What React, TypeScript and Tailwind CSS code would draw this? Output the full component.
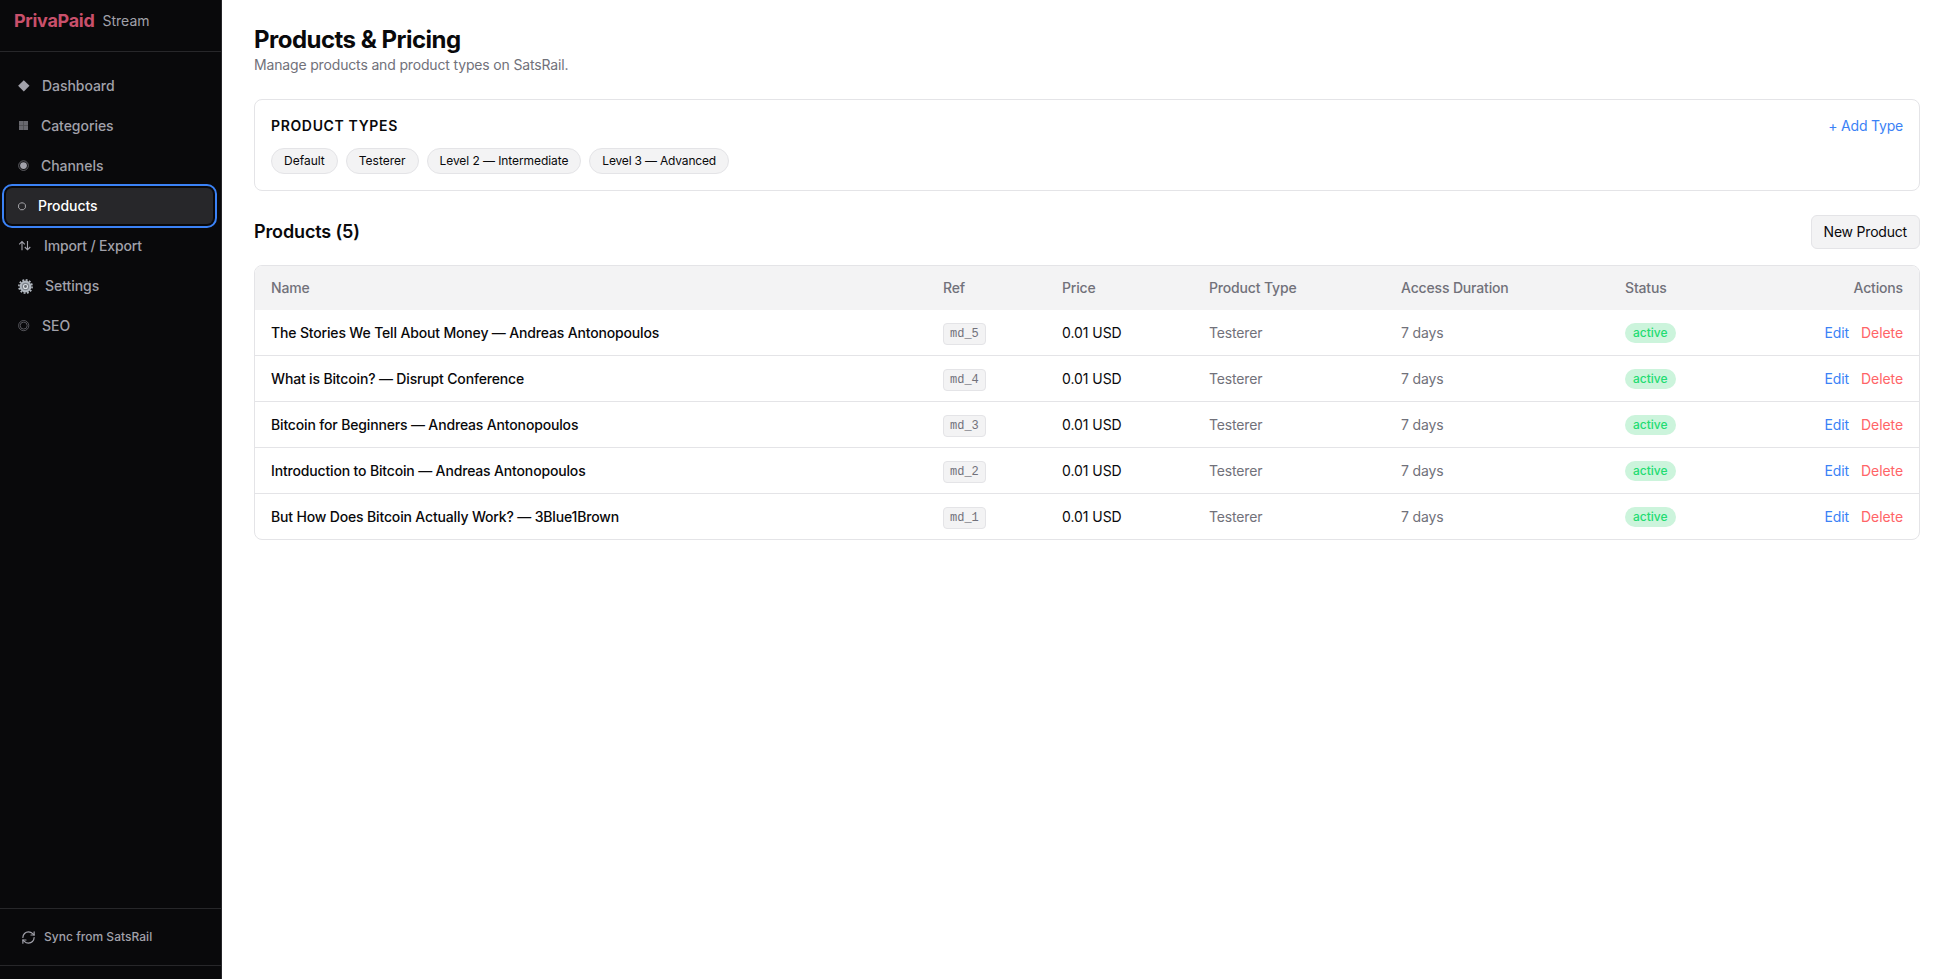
import { useState } from 'react';
import type { ReactNode } from 'react';
import { RefreshCw } from 'lucide-react';

interface NavItem {
  label: string;
  icon: ReactNode;
  iconClass: string;
  textClass?: string;
}

const GearIcon = () => (
  <svg width="15" height="15" viewBox="0 0 15 15" fill="none">
    <circle cx="7.5" cy="7.5" r="6.6" stroke="#b4bac2" strokeWidth="1.6" strokeDasharray="1.9 1.56" />
    <circle cx="7.5" cy="7.5" r="4.8" fill="#7d838b" stroke="#b0b7bf" strokeWidth="2.2" />
    <circle cx="7.5" cy="7.5" r="2" fill="#62676e" stroke="#dde2e7" strokeWidth="1.1" />
  </svg>
);

const navItems: NavItem[] = [
  {
    label: 'Dashboard',
    iconClass: 'w-[12px]',
    icon: (
      <svg width="12" height="12" viewBox="0 0 12 12">
        <path d="M5.8 0.2 11.5 5.8 5.8 11.4 0.1 5.8Z" fill="#a1a1aa" />
      </svg>
    ),
  },
  {
    label: 'Categories',
    iconClass: 'w-[11px]',
    icon: (
      <svg width="11" height="10" viewBox="0 0 11 10">
        <path d="M1 0h9v9H1z" fill="#68686e" />
        <path d="M5.5 0v9M1 4.5h9" stroke="#4c4c51" strokeWidth="0.8" />
      </svg>
    ),
  },
  {
    label: 'Channels',
    iconClass: 'w-[11px]',
    icon: (
      <svg width="11" height="12" viewBox="0 0 11 12">
        <circle cx="5.5" cy="5.6" r="4.8" fill="none" stroke="#77777e" strokeWidth="0.8" />
        <circle cx="5.5" cy="5.6" r="3.4" fill="#a1a1aa" />
      </svg>
    ),
  },
  {
    label: 'Products',
    iconClass: 'w-[8px]',
    icon: (
      <svg width="8" height="10" viewBox="0 0 8 10" fill="none">
        <path d="M2.5 1.9h3L7.4 3.8v3L5.5 8.7h-3L0.6 6.8v-3Z" stroke="#b4b4b8" strokeWidth="0.9" />
      </svg>
    ),
  },
  {
    label: 'Import / Export',
    iconClass: 'w-[14px]',
    textClass: 'tracking-[-0.15px]',
    icon: (
      <svg width="14" height="12" viewBox="0 0 14 12" fill="none" stroke="#a1a1aa" strokeWidth="1.1">
        <path d="M4 10.3V1.5M1.2 4.3 4 1.5 6.8 4.3M9.5 1v8.8M6.8 7 9.5 9.8 12.3 7" />
      </svg>
    ),
  },
  { label: 'Settings', iconClass: 'w-[15px]', icon: <GearIcon /> },
  {
    label: 'SEO',
    iconClass: 'w-[12px]',
    icon: (
      <svg width="12" height="12" viewBox="0 0 12 12" fill="none" stroke="#74747b" strokeWidth="0.7">
        <circle cx="5.7" cy="5.6" r="5.1" />
        <circle cx="5.7" cy="5.6" r="3.5" />
      </svg>
    ),
  },
];

const productTypes = [
  { name: 'Default', className: '' },
  { name: 'Testerer', className: '' },
  { name: 'Level 2 — Intermediate', className: 'tracking-[-0.08px]' },
  { name: 'Level 3 — Advanced', className: 'tracking-[-0.18px]' },
];

const products = [
  { name: 'The Stories We Tell About Money — Andreas Antonopoulos', ref: 'md_5' },
  { name: 'What is Bitcoin? — Disrupt Conference', ref: 'md_4' },
  { name: 'Bitcoin for Beginners — Andreas Antonopoulos', ref: 'md_3' },
  { name: 'Introduction to Bitcoin — Andreas Antonopoulos', ref: 'md_2' },
  { name: 'But How Does Bitcoin Actually Work? — 3Blue1Brown', ref: 'md_1' },
];

const Sidebar = () => {
  const [active, setActive] = useState('Products');

  return (
    <aside className="flex w-[222px] shrink-0 flex-col border-r border-[#27272a] bg-[#09090b] text-[#a1a1aa]">
      <div className="flex h-[52px] items-start gap-2 border-b border-[#27272a] pl-[14px] pt-[7px]">
        <span className="text-lg font-bold leading-7 tracking-[-0.3px] text-[#c9506b]">PrivaPaid</span>
        <span className="text-sm leading-7">Stream</span>
      </div>

      <nav className="flex flex-1 flex-col gap-1 pl-1.5 pr-2 pt-4">
        {navItems.map((item) => (
          <button
            key={item.label}
            onClick={() => setActive(item.label)}
            className={`flex h-9 items-center gap-3 rounded-md px-3 text-sm font-medium ${
              active === item.label
                ? 'bg-[#27272a] text-white outline-2 outline-offset-2 outline-[#3b82f6]'
                : 'text-[#a1a1aa]'
            }`}
          >
            <span className={`shrink-0 ${item.iconClass}`}>{item.icon}</span>
            <span className={item.textClass ?? 'tracking-[-0.05px]'}>{item.label}</span>
          </button>
        ))}
      </nav>

      <div className="flex h-[57px] items-center gap-2 border-t border-[#27272a] pl-[21px] text-xs font-medium tracking-[0.03px]">
        <RefreshCw size={15} strokeWidth={1.9} />
        Sync from SatsRail
      </div>
      <div className="h-[14px] border-t border-[#27272a]" />
    </aside>
  );
};

const ProductTable = () => (
  <div className="overflow-hidden rounded-lg border border-[#e4e4e7]">
    <table className="w-full table-fixed border-separate border-spacing-0 text-left text-sm tracking-[-0.16px]">
      <colgroup>
        <col className="w-[672px]" />
        <col className="w-[119px]" />
        <col className="w-[147px]" />
        <col className="w-[192px]" />
        <col className="w-[224px]" />
        <col className="w-[155px]" />
        <col />
      </colgroup>
      <thead className="bg-[#f3f3f4] text-[#71717a]">
        <tr className="h-11">
          <th className="px-4 font-medium">Name</th>
          <th className="px-4 font-medium">Ref</th>
          <th className="px-4 font-medium">Price</th>
          <th className="px-4 font-medium">Product Type</th>
          <th className="px-4 font-medium">Access Duration</th>
          <th className="px-4 font-medium">Status</th>
          <th className="px-4 text-right font-medium">Actions</th>
        </tr>
      </thead>
      <tbody className="[&>tr:not(:last-child)>td]:border-b [&>tr:not(:last-child)>td]:border-[#e4e4e7]">
        {products.map((product) => (
          <tr key={product.ref} className="h-[46px] last:h-[45px]">
            <td className="px-4 font-medium">{product.name}</td>
            <td className="px-4">
              <code className="mt-0.5 inline-block rounded border border-[#e4e4e7] bg-[#f3f3f4] px-1.5 py-0.5 align-middle font-['Liberation_Mono',monospace] text-xs tracking-normal text-[#71717a]">
                {product.ref}
              </code>
            </td>
            <td className="px-4 tracking-[-0.06px]">0.01 USD</td>
            <td className="px-4 text-[#71717a]">Testerer</td>
            <td className="px-4 text-[#71717a]">7 days</td>
            <td className="px-4">
              <span className="block w-fit rounded-full bg-[#ccf4dc] px-2 py-0.5 text-xs font-medium tracking-normal text-[#22dc72]">
                active
              </span>
            </td>
            <td className="px-4">
              <div className="flex justify-end gap-3 tracking-[-0.08px]">
                <button className="text-[#3b82f6]">Edit</button>
                <button className="text-[#ff6467]">Delete</button>
              </div>
            </td>
          </tr>
        ))}
      </tbody>
    </table>
  </div>
);

const App = () => {
  return (
    <div className="flex h-screen overflow-hidden bg-white font-['Inter',sans-serif] text-[#09090b]">
      <Sidebar />
      <main className="min-w-0 flex-1 pl-8 pr-6 pt-6">
        <h1 className="text-2xl font-bold leading-8 tracking-[-0.52px]">Products &amp; Pricing</h1>
        <p className="mb-[25px] text-sm leading-[18px] tracking-[-0.16px] text-[#71717a]">
          Manage products and product types on SatsRail.
        </p>

        {/* Product types */}
        <section className="rounded-lg border border-[#e4e4e7] p-4">
          <div className="mb-3 flex items-center justify-between">
            <h2 className="text-sm font-semibold uppercase tracking-[0.65px]">Product Types</h2>
            <button className="text-sm tracking-[-0.2px] text-[#3b82f6]">+ Add Type</button>
          </div>
          <div className="flex gap-2">
            {productTypes.map((type) => (
              <span
                key={type.name}
                className={`rounded-full border border-[#e4e4e7] bg-[#f3f3f4] px-3 py-1 text-xs ${type.className}`}
              >
                {type.name}
              </span>
            ))}
          </div>
        </section>

        {/* Products */}
        <div className="mb-4 mt-6 flex items-center justify-between">
          <h2 className="text-lg font-semibold tracking-[-0.13px]">Products ({products.length})</h2>
          <button className="rounded-md border border-[#e4e4e7] bg-[#f3f3f4] px-3 py-1.5 text-sm tracking-[-0.2px]">
            New Product
          </button>
        </div>
        <ProductTable />
      </main>
    </div>
  );
};

export default App;
